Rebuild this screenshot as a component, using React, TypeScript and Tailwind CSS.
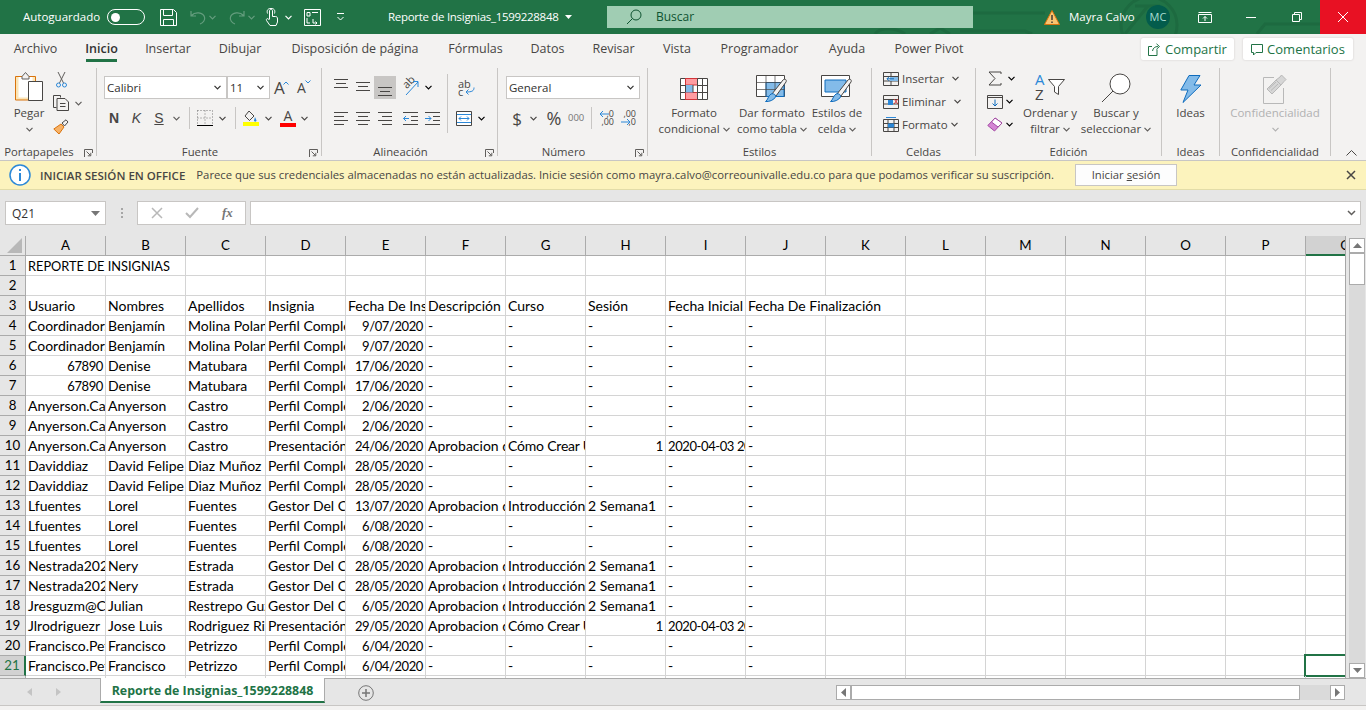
import type { ReactNode } from 'react';

const COLS = ['A', 'B', 'C', 'D', 'E', 'F', 'G', 'H', 'I', 'J', 'K', 'L', 'M', 'N', 'O', 'P', 'Q'];

const DONE = ['-', '-', '-', '-', '-'];
const ROWS: string[][] = [
  ['REPORTE DE INSIGNIAS'],
  [],
  ['Usuario', 'Nombres', 'Apellidos', 'Insignia', 'Fecha De Inscripción', 'Descripción', 'Curso', 'Sesión', 'Fecha Inicial', 'Fecha De Finalización'],
  ['Coordinador.bm', 'Benjamín', 'Molina Polanco', 'Perfil Completo', '9/07/2020', ...DONE],
  ['Coordinador.bm', 'Benjamín', 'Molina Polanco', 'Perfil Completo', '9/07/2020', ...DONE],
  ['67890', 'Denise', 'Matubara', 'Perfil Completo', '17/06/2020', ...DONE],
  ['67890', 'Denise', 'Matubara', 'Perfil Completo', '17/06/2020', ...DONE],
  ['Anyerson.Castro', 'Anyerson', 'Castro', 'Perfil Completo', '2/06/2020', ...DONE],
  ['Anyerson.Castro', 'Anyerson', 'Castro', 'Perfil Completo', '2/06/2020', ...DONE],
  ['Anyerson.Castro', 'Anyerson', 'Castro', 'Presentación del curso', '24/06/2020', 'Aprobacion del curso', 'Cómo Crear Un Curso', '1', '2020-04-03 20:00', '-'],
  ['Daviddiaz', 'David Felipe', 'Diaz Muñoz', 'Perfil Completo', '28/05/2020', ...DONE],
  ['Daviddiaz', 'David Felipe', 'Diaz Muñoz', 'Perfil Completo', '28/05/2020', ...DONE],
  ['Lfuentes', 'Lorel', 'Fuentes', 'Gestor Del Curso', '13/07/2020', 'Aprobacion del curso', 'Introducción a la tutoría', '2 Semana1', '-', '-'],
  ['Lfuentes', 'Lorel', 'Fuentes', 'Perfil Completo', '6/08/2020', ...DONE],
  ['Lfuentes', 'Lorel', 'Fuentes', 'Perfil Completo', '6/08/2020', ...DONE],
  ['Nestrada2020', 'Nery', 'Estrada', 'Gestor Del Curso', '28/05/2020', 'Aprobacion del curso', 'Introducción a la tutoría', '2 Semana1', '-', '-'],
  ['Nestrada2020', 'Nery', 'Estrada', 'Gestor Del Curso', '28/05/2020', 'Aprobacion del curso', 'Introducción a la tutoría', '2 Semana1', '-', '-'],
  ['Jresguzm@Correo', 'Julian', 'Restrepo Guzmán', 'Gestor Del Curso', '6/05/2020', 'Aprobacion del curso', 'Introducción a la tutoría', '2 Semana1', '-', '-'],
  ['Jlrodriguezr', 'Jose Luis', 'Rodriguez Rivera', 'Presentación del curso', '29/05/2020', 'Aprobacion del curso', 'Cómo Crear Un Curso', '1', '2020-04-03 20:00', '-'],
  ['Francisco.Petrizzo', 'Francisco', 'Petrizzo', 'Perfil Completo', '6/04/2020', ...DONE],
  ['Francisco.Petrizzo', 'Francisco', 'Petrizzo', 'Perfil Completo', '6/04/2020', ...DONE],
  [],
];

// tab name + the width it takes in the reference, Open Sans runs a bit off Segoe
const TABS: [string, string][] = [
  ['Archivo', 'w-[43px]'],
  ['Inicio', 'w-[31px]'],
  ['Insertar', 'w-[44px]'],
  ['Dibujar', 'w-[42px]'],
  ['Disposición de página', 'w-[130px]'],
  ['Fórmulas', 'w-[53px]'],
  ['Datos', 'w-[33px]'],
  ['Revisar', 'w-[41px]'],
  ['Vista', 'w-[28px]'],
  ['Programador', 'w-[79px]'],
  ['Ayuda', 'w-[38px]'],
  ['Power Pivot', 'w-[68px]'],
];

function Chev({ className = 'text-[#605e5c]' }: { className?: string }) {
  return (
    <svg width="7" height="5" viewBox="0 0 7 5" className={`shrink-0 inline-block ${className}`}>
      <path d="M0.5 0.8 3.5 3.8 6.5 0.8" fill="none" stroke="currentColor" strokeWidth="1.2" />
    </svg>
  );
}

function Sep() {
  return <div className="w-px h-[88px] mt-[2px] bg-[#c8c6c4] shrink-0" />;
}

function MiniSep() {
  return <div className="w-px h-[22px] bg-[#c8c6c4] shrink-0" />;
}

function Launcher() {
  return (
    <svg width="9" height="9" viewBox="0 0 9 9" className="absolute right-[3px] top-[5px] text-[#605e5c]">
      <path d="M.5 8V.5H8.500V4M2.500 2.500 6.500 6.500M6.800 3.800V6.800H3.800" fill="none" stroke="currentColor" />
    </svg>
  );
}

function Group({ w, label, launcher, children }: { w: string; label: string; launcher?: boolean; children: ReactNode }) {
  return (
    <div className={`${w} shrink-0 flex flex-col mt-[2px]`}>
      <div className="h-[76px] flex">{children}</div>
      <div className={`relative h-[16px] leading-[16px] text-center text-[11.300px] text-[#484644] whitespace-nowrap ${launcher ? 'pr-[18px]' : ''}`}>
        {label}
        {launcher && <Launcher />}
      </div>
    </div>
  );
}

function BigButton({ w, icon, lines, chev, disabled }: { w: string; icon: ReactNode; lines: string[]; chev?: boolean; disabled?: boolean }) {
  return (
    <div className={`${w} shrink-0 flex flex-col items-center text-[11.500px] leading-[16px] whitespace-nowrap ${disabled ? 'text-[#b1b1b1]' : 'text-[#484644]'}`}>
      <div className="h-[37px] pt-[5px] flex items-center justify-center">{icon}</div>
      {lines.map((l, i) => (
        <div key={l} className="flex items-center gap-[3px]">
          {l}
          {chev && i === lines.length - 1 && <Chev />}
        </div>
      ))}
    </div>
  );
}

function Combo({ w, text }: { w: string; text: string }) {
  return (
    <div className={`${w} h-[23px] bg-white border border-[#c8c6c4] flex items-center justify-between pl-[2px] pr-[5px] text-[11.500px] text-[#323130]`}>
      <span>{text}</span>
      <Chev className="text-[#323130]" />
    </div>
  );
}

// three or four horizontal strokes, each [from x, to x, y]
function AlignIcon({ lines, h }: { lines: [number, number, number][]; h: number }) {
  return (
    <svg width="22" height={h} viewBox={`0 0 22 ${h}`} fill="none" className="text-[#484644] shrink-0">
      {lines.map(([a, b, y]) => (
        <path key={`${a}-${y}`} d={`M${a} ${y + 0.5}H${b}`} stroke="currentColor" />
      ))}
    </svg>
  );
}

function IndentIcon({ right }: { right?: boolean }) {
  return (
    <svg width="15" height="13" viewBox="0 0 15 13" fill="none" className="shrink-0">
      <path d="M0 .5H15M8 4.500H15M8 8.500H15M0 12.500H15" stroke="#484644" />
      <path d={right ? 'M0 6.500H6M3.500 4 6 6.500 3.500 9' : 'M6 6.500H0.500M3 4 .5 6.500 3 9'} stroke="#2b88d8" />
    </svg>
  );
}

function TitleBarIcons() {
  return (
    <div className="flex items-center text-white">
      <svg width="17" height="17" viewBox="0 0 17 17" className="ml-[15px]" fill="none" stroke="currentColor">
        <path d="M.5.5H13.500L16.500 3.500V16.500H.5ZM3.500.5V6.500H12.500V.5M3.500 16.500V10.500H13.500V16.500" />
      </svg>
      <svg width="16" height="16" viewBox="0 0 16 16" className="ml-[13px] opacity-30" fill="none" stroke="currentColor" strokeWidth="1.2">
        <path d="M1 2V7H6M1.500 6.500C5 2.500 13 3 14.500 8C15.500 11 13 14 10 15" />
      </svg>
      <Chev className="ml-[3px] opacity-30" />
      <svg width="16" height="16" viewBox="0 0 16 16" className="ml-[13px] opacity-30" fill="none" stroke="currentColor" strokeWidth="1.2">
        <path d="M15 2V7H10M14.500 6.500C11 2.500 3 3 1.500 8C.5 11 3 14 6 15" />
      </svg>
      <Chev className="ml-[3px] opacity-30" />
      <svg width="13" height="18" viewBox="0 0 13 18" className="ml-[10px]" fill="none" stroke="currentColor">
        <path d="M4.500 11V3C4.500.8 7.500.8 7.500 3V8.500H10.500C12 8.500 12.500 9.500 12.500 11V14L11 17.500H5L1.500 12.500C.8 11 2.500 10 3.500 11L4.500 12M2.500 5.500C1.500 2 3 .5 6 .5S10.500 2 9.500 5.500" />
      </svg>
      <Chev className="ml-[7px] text-white" />
      <svg width="17" height="17" viewBox="0 0 17 17" className="ml-[12px]" fill="none" stroke="currentColor">
        <path d="M.5.5H16.500V16.500H.5ZM3 3.500H6V7H3ZM8 3.500H14M3 9V14H6M9 10V14H13M11.500 12.500 13 14 11.500 15.500" />
      </svg>
      <svg width="9" height="8" viewBox="0 0 9 8" className="ml-[15px]" fill="none" stroke="currentColor">
        <path d="M1 .5H8M1.500 4 4.500 7 7.500 4" />
      </svg>
    </div>
  );
}

function TitleBar() {
  return (
    <div className="relative h-[34px] bg-[#217346] flex items-center text-white text-[11.500px] shrink-0 overflow-hidden">
      {/* faint circuit board from the Office theme */}
      <svg width="466" height="34" viewBox="0 0 466 34" className="absolute left-[860px] top-0 text-[#1d6a40]" fill="none" stroke="currentColor" strokeWidth="3">
        <circle cx="289" cy="25" r="28" />
        <path d="M275 6H300M288 6 265 34" />
        <path d="M113 13H185M15 34C20 27 35 27 45 34M70 34 80 28 90 34M100 31H165L172 34M397 34 405 24H466" />
      </svg>
      <div className="relative flex items-center">
        <span className="ml-[23px] w-[78px] whitespace-nowrap">Autoguardado</span>
        <div className="ml-[6px] w-[38px] h-[16px] rounded-full border border-white flex items-center pl-[3px]">
          <div className="w-[9px] h-[9px] rounded-full bg-white" />
        </div>
        <TitleBarIcons />
      </div>
      <div className="relative ml-[43px] flex items-center">
        <span className="w-[171px] whitespace-nowrap tracking-[-0.3px]">Reporte de Insignias_1599228848</span>
        <svg width="7" height="4" viewBox="0 0 7 4" className="ml-[6px]"><path d="M0 0H7L3.500 4Z" fill="currentColor" /></svg>
      </div>
      <div className="relative ml-[35px] w-[366px] h-[22px] bg-[#a0cdb3] flex items-center text-[#0f5331] text-[12px]">
        <svg width="16" height="16" viewBox="0 0 16 16" className="ml-[19px]" fill="none" stroke="currentColor">
          <circle cx="10" cy="6" r="5" />
          <path d="M6.500 9.500 1 15" />
        </svg>
        <span className="ml-[14px]">Buscar</span>
      </div>
      <div className="relative ml-[71px] flex items-center">
        <svg width="16" height="15" viewBox="0 0 16 15">
          <path d="M8 .5 15.500 14.500H.5Z" fill="#f8c471" stroke="#d9730d" />
          <path d="M8 5V10M8 11.500V13" stroke="#323130" strokeWidth="1.400" />
        </svg>
        <span className="ml-[9px] w-[66px] whitespace-nowrap">Mayra Calvo</span>
        <div className="ml-[11px] w-[24px] h-[24px] rounded-full bg-[#035c4c] flex items-center justify-center text-[11px] text-[#a9dfd3]">MC</div>
      </div>
      <div className="relative ml-auto flex items-center h-full">
        <div className="w-[46px] flex justify-center">
          <svg width="14" height="11" viewBox="0 0 14 11" fill="none" stroke="currentColor"><path d="M.5 2.500H13.500V10.500H.5ZM.5.5H13.500M7 9V4.500M5 6.500 7 4.500 9 6.500" /></svg>
        </div>
        <div className="w-[46px] flex justify-center">
          <svg width="10" height="1" viewBox="0 0 10 1"><path d="M0 .5H10" stroke="currentColor" /></svg>
        </div>
        <div className="w-[46px] flex justify-center">
          <svg width="10" height="10" viewBox="0 0 10 10" fill="none" stroke="currentColor"><path d="M.5 2.500H7.500V9.500H.5ZM2.500 2.500V.5H9.500V7.500H7.500" /></svg>
        </div>
        <div className="w-[46px] h-full bg-[#e81123] flex items-center justify-center">
          <svg width="10" height="10" viewBox="0 0 10 10" fill="none" stroke="currentColor"><path d="M0 0 10 10M10 0 0 10" /></svg>
        </div>
      </div>
    </div>
  );
}

function TabRow() {
  return (
    <div className="h-[32px] flex items-start pl-[14px] pr-[13px] shrink-0 text-[12.500px] text-[#484644]">
      <div className="flex gap-[29px]">
        {TABS.map(([t, w]) => (
          <div key={t} className={`${w} h-[28px] flex items-center justify-center whitespace-nowrap border-b-[3px] pt-[6px] ${t === 'Inicio' ? 'border-[#217346] font-semibold text-[#323130]' : 'border-transparent'}`}>
            {t}
          </div>
        ))}
      </div>
      <div className="ml-auto flex gap-[9px] mt-[4px] text-[#217346] font-medium text-[13px]">
        <div className="w-[93px] h-[22px] pt-px bg-white rounded-[2px] shadow-[0_0_2px_#c8c6c4] flex items-center justify-center gap-[4px]">
          <svg width="13" height="13" viewBox="0 0 13 13" fill="none" stroke="currentColor"><path d="M9 6.500V12.500H.5V3.500H4M4.500 8C5 5 7 3.500 10 3.500M8.500 .8 11.500 3.500 8.500 6.200" /></svg>
          Compartir
        </div>
        <div className="w-[110px] h-[22px] pt-px bg-white rounded-[2px] shadow-[0_0_2px_#c8c6c4] flex items-center justify-center gap-[4px]">
          <svg width="12" height="12" viewBox="0 0 12 12" fill="none" stroke="currentColor"><path d="M.5.5H11.500V8.500H5L2.500 11V8.500H.5Z" /></svg>
          Comentarios
        </div>
      </div>
    </div>
  );
}

function PasteIcon() {
  return (
    <svg width="28" height="31" viewBox="0 0 28 31">
      <path d="M.5 4.500H20.500V28H.5Z" fill="#fbe5b6" stroke="#d9730d" />
      <path d="M3.500 5H17.500V25.500H3.500Z" fill="#fff" />
      <path d="M7 4.500 10.500.5 14 4.500V7H7Z" fill="#f3f2f1" stroke="#605e5c" />
      <path d="M13.500 9.500H27.500V28.500H13.500Z" fill="#fff" stroke="#484644" />
    </svg>
  );
}

function Clipboard() {
  return (
    <div className="flex shrink-0">
      <div className="w-[46px] ml-[6px] pt-[3px] flex flex-col items-center text-[11.500px] text-[#484644] leading-[16px]">
        <div className="h-[34px] pt-[1px]"><PasteIcon /></div>
        <div>Pegar</div>
        <div className="h-[16px] flex items-center"><Chev /></div>
      </div>
      <div className="-mt-px flex flex-col">
        <div className="h-[24px] flex items-center pl-[4px]">
          <svg width="11" height="17" viewBox="0 0 11 17" fill="none">
            <path d="M2 1 7.500 12M9 1 3.500 12" stroke="#605e5c" />
            <circle cx="2.500" cy="14" r="2" stroke="#2b88d8" />
            <circle cx="8.500" cy="14" r="2" stroke="#2b88d8" />
          </svg>
        </div>
        <div className="h-[24px] flex items-center gap-[5px] pl-[1px]">
          <svg width="17" height="16" viewBox="0 0 17 16" fill="none" stroke="#484644">
            <path d="M.5.5H7.500V2.500M.5.5V12.500H3.500M4 3.500H12L15.500 7V15.500H4ZM7 8.500H12.500M7 11.500H12.500" />
          </svg>
          <Chev />
        </div>
        <div className="h-[24px] flex items-center pl-[1px]">
          <svg width="16" height="16" viewBox="0 0 16 16">
            <path d="M8 5 11 8 6 15 .8 10Z" fill="#f7b267" stroke="#d9730d" />
            <path d="M9 4 13 .8 15 3 11.500 7Z" fill="#f3f2f1" stroke="#484644" />
          </svg>
        </div>
      </div>
    </div>
  );
}

function Font() {
  return (
    <div className="pl-[7px] pt-[8px]">
      <div className="flex items-center">
        <Combo w="w-[123px]" text="Calibri" />
        <Combo w="w-[43px]" text="11" />
        <span className="relative ml-[4px] w-[15px] text-[17px] text-[#484644] leading-[20px]">
          A
          <svg width="6" height="4" viewBox="0 0 6 4" className="absolute right-0 top-[3px]" fill="none" stroke="#2b88d8"><path d="M.5 3.500 3 1 5.500 3.500" /></svg>
        </span>
        <span className="relative ml-[8px] w-[14px] text-[14px] text-[#484644] leading-[20px]">
          A
          <svg width="6" height="4" viewBox="0 0 6 4" className="absolute right-0 top-[2px]" fill="none" stroke="#2b88d8"><path d="M.5.5 3 3 5.500 .5" /></svg>
        </span>
      </div>
      <div className="flex items-center h-[22px] mt-[8px] text-[#484644]">
        <span className="ml-[5px] w-[10px] text-center text-[14px] font-bold font-['Liberation_Sans',sans-serif]">N</span>
        <span className="ml-[14px] w-[7px] flex justify-center text-[14px] italic font-['Liberation_Sans',sans-serif]">K</span>
        <span className="ml-[15px] w-[8px] flex justify-center text-[14px] underline font-['Liberation_Sans',sans-serif]">S</span>
        <Chev className="ml-[10px] text-[#605e5c]" />
        <div className="ml-[9px]"><MiniSep /></div>
        <svg width="16" height="16" viewBox="0 0 16 16" className="ml-[7px]" fill="none" stroke="#767676" strokeDasharray="1 2">
          <path d="M.5.5H15.500M.5.5V15.500M15.500.5V15.500M8 .5V15.500M.5 8H15.500" />
          <path d="M0 15.500H16" stroke="#000" strokeDasharray="none" />
        </svg>
        <Chev className="ml-[6px]" />
        <div className="ml-[9px]"><MiniSep /></div>
        <div className="ml-[7px] w-[16px] flex flex-col items-center">
          <svg width="14" height="12" viewBox="0 0 14 12" fill="none">
            <path d="M5 1 10 6 5.500 10.500 1 6Z" stroke="#484644" />
            <path d="M11 7 12.500 10.500C12.500 12 10 12 10 10.500Z" fill="#2b88d8" />
          </svg>
          <div className="w-[16px] h-[4px] bg-[#ffff00]" />
        </div>
        <Chev className="ml-[6px]" />
        <div className="ml-[8px] w-[16px] flex flex-col items-center">
          <span className="text-[14px] leading-[14px] text-[#484644]">A</span>
          <div className="w-[16px] h-[4px] bg-[#ff0000]" />
        </div>
        <Chev className="ml-[5px]" />
      </div>
    </div>
  );
}

function Alignment() {
  return (
    <div className="pl-[8px] pt-[8px] flex">
      <div className="w-[117px]">
        <div className="flex items-center h-[23px]">
          <AlignIcon h={23} lines={[[4, 18, 3], [6, 16, 7], [4, 18, 11]]} />
          <AlignIcon h={23} lines={[[4, 18, 6], [6, 16, 10], [4, 18, 14]]} />
          <div className="bg-[#c8c6c4] w-[22px] h-[23px] shrink-0">
            <AlignIcon h={23} lines={[[4, 18, 11], [6, 16, 15], [4, 18, 19]]} />
          </div>
          <div className="relative ml-[6px] w-[17px] h-[17px] shrink-0">
            <span className="absolute left-0 top-[-3px] text-[11px] leading-[12px] text-[#484644] -rotate-45">ab</span>
            <svg width="17" height="17" viewBox="0 0 17 17" fill="none" stroke="#2b88d8" className="absolute left-0 top-0">
              <path d="M4 16 16 3M11 2.500H16V8" />
            </svg>
          </div>
          <Chev className="ml-[6px]" />
        </div>
        <div className="flex items-center mt-[8px] h-[22px]">
          <AlignIcon h={22} lines={[[4, 18, 5], [4, 14, 9], [4, 18, 13], [4, 14, 17]]} />
          <AlignIcon h={22} lines={[[4, 18, 5], [6, 16, 9], [4, 18, 13], [6, 16, 17]]} />
          <AlignIcon h={22} lines={[[4, 18, 5], [8, 18, 9], [4, 18, 13], [8, 18, 17]]} />
          <div className="ml-[7px]"><IndentIcon /></div>
          <div className="ml-[7px]"><IndentIcon right /></div>
        </div>
      </div>
      <div className="w-px h-[59px] -mt-[2px] bg-[#c8c6c4] shrink-0" />
      <div className="ml-[8px]">
        <div className="h-[23px] pt-[4px] flex items-start">
          <span className="relative w-[16px] ml-[2px] text-[11px] leading-[8px] text-[#484644]">
            ab<br />c
            <svg width="11" height="8" viewBox="0 0 11 8" fill="none" stroke="#2b88d8" className="absolute left-[6px] top-[7px]">
              <path d="M10 .5C10 4 8 5 2 5M4.500 2.500 2 5 4.500 7.500" />
            </svg>
          </span>
        </div>
        <div className="flex items-center h-[22px] mt-[8px]">
          <svg width="16" height="15" viewBox="0 0 16 15" fill="none">
            <path d="M.5.5H15.500V14.500H.5Z" fill="#fff" stroke="#484644" />
            <path d="M1 3.500H15M1 11.500H15" stroke="#2b88d8" />
            <path d="M3 7.500H13M5 5.500 3 7.500 5 9.500M11 5.500 13 7.500 11 9.500" stroke="#2b88d8" />
          </svg>
          <Chev className="ml-[6px]" />
        </div>
      </div>
    </div>
  );
}

function DecimalIcon({ more }: { more?: boolean }) {
  return (
    <div className="relative w-[15px] h-[16px] shrink-0 text-[9px] leading-[8px] text-right text-[#484644]">
      {more ? ',00' : ',0'}
      <br />
      {more ? ',0' : ',00'}
      <svg width="10" height="8" viewBox="0 0 10 8" fill="none" stroke="#2b88d8" className={`absolute left-0 ${more ? 'top-[8px]' : 'top-0'}`}>
        <path d={more ? 'M0 4H9M6 1 9 4 6 7' : 'M10 4H1M4 1 1 4 4 7'} />
      </svg>
    </div>
  );
}

function NumberGroup() {
  return (
    <div className="pl-[8px] pt-[8px]">
      <Combo w="w-[134px]" text="General" />
      <div className="flex items-center h-[22px] mt-[8px] text-[#484644]">
        <span className="ml-[5px] w-[12px] text-center text-[17px] leading-none">$</span>
        <Chev className="ml-[7px]" />
        <span className="ml-[9px] w-[16px] flex justify-center text-[18px] leading-none">%</span>
        <span className="ml-[6px] text-[9.500px] w-[16px] text-[#767676]">000</span>
        <div className="ml-[7px]"><MiniSep /></div>
        <div className="ml-[7px]"><DecimalIcon /></div>
        <div className="ml-[7px]"><DecimalIcon more /></div>
      </div>
    </div>
  );
}

function CondIcon() {
  return (
    <svg width="28" height="22" viewBox="0 0 28 22" fill="none">
      <path d="M.5.5H27.500V21.500H.5Z" fill="#fff" stroke="#484644" />
      <path d="M5.500.5H17.500V7H5.500ZM5.500 14.500H17.500V21.500H5.500Z" fill="#ff9ca1" stroke="#d13438" />
      <path d="M5.500 7H13V14.500H5.500Z" fill="#83bbe9" />
      <path d="M5.500 7V14.500M13 7V14.500M17.500 .5V21.500M22.500 .5V21.500M.5 7.500H5M17.500 7.500H27.500M.5 14.500H5M17.500 14.500H27.500" stroke="#484644" />
    </svg>
  );
}

function TableBrush({ wide }: { wide?: boolean }) {
  return (
    <svg width="32" height="28" viewBox="0 0 32 28" fill="none">
      <path d="M.5.5H28.500V21.500H.5Z" fill="#fff" stroke="#484644" />
      <path d={wide ? 'M4 5H25V17H4Z' : 'M10 7.500H28V21.500H10Z'} fill="#83bbe9" stroke="#0f6cbd" />
      {!wide && <path d="M.5 7.500H28.500M.5 14.500H28.500M10 .5V21.500M19 .5V21.500" stroke="#484644" strokeOpacity=".7" />}
      <path d="M16 19 27 5C29 3 31 5 30 7L20 21Z" fill="#f3f2f1" stroke="#484644" />
      <path d="M15 19C18 18 20 20 19.500 22C18 25 13 27 9.500 26.500C12 25 12 21 15 19Z" fill="#83bbe9" stroke="#0f6cbd" />
    </svg>
  );
}

function Styles() {
  return (
    <div className="pl-[8px] flex">
      <BigButton w="w-[76px]" icon={<CondIcon />} lines={['Formato', 'condicional']} chev />
      <BigButton w="w-[80px]" icon={<TableBrush />} lines={['Dar formato', 'como tabla']} chev />
      <BigButton w="w-[50px]" icon={<TableBrush wide />} lines={['Estilos de', 'celda']} chev />
    </div>
  );
}

function Cells() {
  const row = (icon: ReactNode, text: string, gap: string) => (
    <div className="h-[23px] flex items-center text-[11.500px] text-[#484644]">
      <div className="w-[19px]">{icon}</div>
      <span>{text}</span>
      <Chev className={gap} />
    </div>
  );
  return (
    <div className="pl-[11px] -mt-px">
      {row(
        <svg width="16" height="14" viewBox="0 0 16 14" fill="none"><path d="M.5.5H15.500V13.500H.5ZM.5 4.500H15.500M.5 9H15.500M8 .5V13.500" stroke="#484644" /><path d="M7 5H15V9H7Z" fill="#83bbe9" /><path d="M11 6.800H4M6 4.800 4 6.800 6 8.800" stroke="#0f6cbd" /></svg>,
        'Insertar', 'ml-[8px]')}
      {row(
        <svg width="16" height="14" viewBox="0 0 16 14" fill="none"><path d="M.5.5H15.500V13.500H.5ZM.5 4.500H15.500M.5 9H15.500" stroke="#484644" /><path d="M5 5H10V10H5Z" fill="#2b88d8" /><path d="M11 4 15 9M15 4 11 9" stroke="#d13438" /></svg>,
        'Eliminar', 'ml-[8px]')}
      {row(
        <svg width="16" height="15" viewBox="0 0 16 15" fill="none"><path d="M.5 2.500H15.500V14.500H.5ZM.5 6.500H15.500M.5 10.500H15.500M5 2.500V14.500M11 2.500V14.500" stroke="#484644" /><path d="M5 6.500H11V10.500H5Z" fill="#2b88d8" /><path d="M3 .5H13" stroke="#2b88d8" /></svg>,
        'Formato', 'ml-[3px]')}
    </div>
  );
}

function Editing() {
  return (
    <div className="flex pl-[11px]">
      <div className="w-[32px] -mt-px">
        <div className="h-[23px] flex items-center">
          <svg width="16" height="15" viewBox="0 0 16 15" fill="none" stroke="#484644"><path d="M14 3V1H2L8 7.500 2 14H14V12" /></svg>
          <Chev className="ml-[5px]" />
        </div>
        <div className="h-[23px] flex items-center">
          <svg width="16" height="14" viewBox="0 0 16 14" fill="none"><path d="M.5.5H15.500V13.500H.5ZM.5 2.500H15.500" stroke="#484644" /><path d="M8 4.500V11M5.500 8.500 8 11 10.500 8.500" stroke="#0f6cbd" /></svg>
          <Chev className="ml-[3px]" />
        </div>
        <div className="h-[23px] flex items-center">
          <svg width="16" height="15" viewBox="0 0 16 15"><path d="M.8 8.500 8 1 15 6 7.500 14Z" fill="#d486d4" stroke="#a349a4" /><path d="M8 1 15 6 11 10 4.500 5Z" fill="#fff" stroke="#a349a4" /></svg>
          <Chev className="ml-[3px]" />
        </div>
      </div>
      <BigButton w="w-[62px]" icon={
        <div className="relative w-[30px] h-[28px] -mt-[3px]">
          <span className="absolute left-0 -top-[2px] text-[15px] leading-[15px] text-[#2b88d8]">A</span>
          <span className="absolute left-0 top-[13px] text-[15px] leading-[15px] text-[#484644]">Z</span>
          <svg width="17" height="16" viewBox="0 0 17 16" fill="none" className="absolute right-0 top-[5px]"><path d="M.5.5H16.500L10.500 7.500V15.500L6.500 13V7.500Z" stroke="#484644" fill="#fff" /></svg>
        </div>
      } lines={['Ordenar y', 'filtrar']} chev />
      <BigButton w="w-[70px]" icon={
        <svg width="30" height="30" viewBox="0 0 30 30" fill="none" stroke="#484644" className="-mt-[2px]"><circle cx="19" cy="11" r="10" fill="#fff" /><path d="M12 18 1 29" /></svg>
      } lines={['Buscar y', 'seleccionar']} chev />
    </div>
  );
}

function Sheet() {
  return (
    <div className="flex-1 min-w-0 overflow-hidden border-r border-[#a6a6a6]">
      <div className="grid grid-cols-[26px_repeat(17,80px)] grid-rows-[repeat(22,20px)] w-[1386px] bg-white font-['Lato',sans-serif] text-[14px] text-[#000]">
        <div className="bg-[#e6e6e6] border-r border-b border-[#ababab] relative">
          <svg width="15" height="15" viewBox="0 0 15 15" className="absolute right-[3px] bottom-[2px]"><path d="M15 0V15H0Z" fill="#b8b8b8" /></svg>
        </div>
        {COLS.map((c) => (
          <div
            key={c}
            className={`flex items-center justify-center pt-px text-[13.300px] border-r border-[#ababab] ${c === 'Q' ? 'bg-[#d2d2d2] border-b-[2px] border-b-[#217346]' : 'bg-[#e6e6e6] border-b border-b-[#ababab]'}`}
          >
            {c}
          </div>
        ))}
        {ROWS.map((row, r) => {
          const cells: ReactNode[] = [];
          let skip = false;
          COLS.forEach((_, c) => {
            if (skip) {
              skip = false;
              return;
            }
            const text = row[c] ?? '';
            const isWide = (r === 0 && c === 0) || (r === 2 && c === 9);
            skip = isWide;
            const right = /^[\d/]+$/.test(text);
            const compact = right || text.startsWith('2020');
            const selected = r === 20 && c === 16;
            cells.push(
              <div
                key={c}
                className={`relative whitespace-nowrap px-[2px] leading-[20px] border-r border-b border-[#d4d4d4] ${selected ? 'overflow-visible' : 'overflow-hidden'} ${isWide ? 'col-span-2' : ''} ${right ? 'text-right' : 'text-left'} ${compact ? 'text-[13px] tracking-[-0.4px]' : ''} ${text.startsWith('Cómo') ? 'tracking-[-0.2px]' : ''} ${r === 0 ? 'text-[12.800px]' : ''}`}
              >
                {text}
                {selected && <div className="absolute -left-[2px] -top-[2px] w-[82px] h-[23px] border-2 border-[#217346]" />}
              </div>,
            );
          });
          return (
            <div key={r} className="contents">
              <div className={`flex items-center justify-center text-[13.300px] border-b border-r border-[#ababab] ${r === 20 ? 'bg-[#d2d2d2] text-[#217346] border-r-2 border-r-[#217346]' : 'bg-[#e6e6e6]'}`}>
                {r + 1}
              </div>
              {cells}
            </div>
          );
        })}
      </div>
    </div>
  );
}

function VScroll() {
  const btn = 'w-[16px] h-[15px] shrink-0 bg-white border border-[#ababab] flex items-center justify-center';
  return (
    <div className="w-[20px] shrink-0 pt-[2px] pl-[3px] flex flex-col bg-[#e6e6e6]">
      <div className={btn}><svg width="9" height="5" viewBox="0 0 9 5"><path d="M0 5 4.500 0 9 5Z" fill="#767676" /></svg></div>
      <div className="flex-1 w-[16px] bg-[#dadada] flex flex-col">
        <div className="h-[32px] bg-white border border-[#ababab]" />
      </div>
      <div className={btn}><svg width="9" height="5" viewBox="0 0 9 5"><path d="M0 0 4.500 5 9 0Z" fill="#767676" /></svg></div>
    </div>
  );
}

function SheetTabs() {
  return (
    <div className="h-[27px] bg-[#e6e6e6] flex shrink-0 border-t border-[#ababab] text-[12.400px]">
      <div className="w-[100px] h-[24px] flex items-center pl-[27px] gap-[24px] text-[#c4c4c4] pt-[2px]">
        <svg width="5" height="8" viewBox="0 0 5 8"><path d="M5 0V8L0 4Z" fill="currentColor" /></svg>
        <svg width="5" height="8" viewBox="0 0 5 8"><path d="M0 0V8L5 4Z" fill="currentColor" /></svg>
      </div>
      <div className="-mt-px w-[225px] h-[25px] pt-[4px] bg-white border-l border-r border-[#ababab] border-b-2 border-b-[#217346] flex items-center justify-center font-bold text-[#217346] whitespace-nowrap">
        Reporte de Insignias_1599228848
      </div>
      <div className="ml-[33px] h-[24px] pt-[3px] flex items-center">
        <svg width="16" height="16" viewBox="0 0 16 16" fill="none" stroke="#767676"><circle cx="8" cy="8" r="7.300" /><path d="M8 4V12M4 8H12" strokeWidth="1.500" /></svg>
      </div>
      <div className="ml-auto mr-[21px] flex items-start pt-[6px] h-[24px]">
        <div className="w-[15px] h-[15px] bg-white border border-[#ababab] flex items-center justify-center"><svg width="5" height="9" viewBox="0 0 5 9"><path d="M5 0V9L0 4.500Z" fill="#767676" /></svg></div>
        <div className="w-[449px] h-[15px] bg-white border border-[#ababab]" />
        <div className="w-[30px] h-[15px] bg-[#dadada]" />
        <div className="w-[15px] h-[15px] bg-white border border-[#ababab] flex items-center justify-center"><svg width="5" height="9" viewBox="0 0 5 9"><path d="M0 0V9L5 4.500Z" fill="#767676" /></svg></div>
      </div>
    </div>
  );
}

export default function App() {
  return (
    <div className="w-[1366px] h-[710px] overflow-hidden flex flex-col bg-[#f3f2f1] font-['Open_Sans',sans-serif]">
      <TitleBar />
      <TabRow />
      <div className="h-[95px] flex shrink-0 border-b border-[#c8c6c4]">
        <Group w="w-[96px]" label="Portapapeles" launcher><Clipboard /></Group>
        <Sep />
        <Group w="w-[224px]" label="Fuente" launcher><Font /></Group>
        <Sep />
        <Group w="w-[175px]" label="Alineación" launcher><Alignment /></Group>
        <Sep />
        <Group w="w-[149px]" label="Número" launcher><NumberGroup /></Group>
        <Sep />
        <Group w="w-[223px]" label="Estilos"><Styles /></Group>
        <Sep />
        <Group w="w-[103px]" label="Celdas"><Cells /></Group>
        <Sep />
        <Group w="w-[185px]" label="Edición"><Editing /></Group>
        <Sep />
        <Group w="w-[57px]" label="Ideas">
          <BigButton w="w-[57px]" lines={['Ideas']} icon={
            <svg width="22" height="28" viewBox="0 0 22 28"><path d="M9 .5H20L14 10H21L3 27.500L8 15H.8Z" fill="#83bbe9" stroke="#0f6cbd" /></svg>
          } />
        </Group>
        <Sep />
        <Group w="w-[110px]" label="Confidencialidad">
          <div className="w-[110px] flex flex-col items-center">
            <BigButton w="w-[110px]" disabled lines={['Confidencialidad']} icon={
              <svg width="24" height="30" viewBox="0 0 24 30" fill="none" stroke="#b8b8b8">
                <path d="M.5 3.500H11M20.500 14V29.500H.5V3.500" />
                <path d="M4 15 13 6 18 11 9 20Z" fill="#d6d6d6" />
                <path d="M6 14.500 13 8M8 16.500 15 10" />
                <path d="M13 6 17 3 18.500 1 23 5.500 21 7.500 18 11Z" fill="#d6d6d6" />
              </svg>
            } />
            <div className="h-[16px] flex items-center"><Chev className="text-[#b1b1b1]" /></div>
          </div>
        </Group>
        <Sep />
        <div className="flex-1 flex justify-end items-end pb-[4px] pr-[9px]">
          <svg width="11" height="6" viewBox="0 0 11 6" fill="none" stroke="#484644"><path d="M.5 5.500 5.500.5 10.500 5.500" /></svg>
        </div>
      </div>
      <div className="h-[29px] bg-[#fcf3bd] flex items-center shrink-0 border-b border-[#e2dca8] text-[#484644] whitespace-nowrap">
        <svg width="22" height="22" viewBox="0 0 22 22" className="ml-[9px]" fill="none">
          <circle cx="11" cy="11" r="10" fill="#fff" stroke="#2b88d8" strokeWidth="1.500" />
          <path d="M11 9V17M11 5V7" stroke="#2b88d8" strokeWidth="2" />
        </svg>
        <span className="ml-[9px] pt-px font-semibold text-[11.500px]">INICIAR SESIÓN EN OFFICE</span>
        <span className="ml-[11px] pt-px text-[11.300px]">Parece que sus credenciales almacenadas no están actualizadas. Inicie sesión como mayra.calvo@correounivalle.edu.co para que podamos verificar su suscripción.</span>
        <div className="ml-auto w-[291px] flex items-center shrink-0">
          <div className="w-[102px] h-[22px] pt-px bg-[#fdfdfd] border border-[#c8c6c4] flex items-center justify-center text-[11.300px]">Iniciar&nbsp;<span className="underline">s</span>esión</div>
          <svg width="10" height="10" viewBox="0 0 10 10" className="ml-[169px]" fill="none" stroke="#484644" strokeWidth="1.500"><path d="M1 1 9 9M9 1 1 9" /></svg>
        </div>
      </div>
      <div className="h-[46px] bg-[#e6e6e6] flex items-start pt-[11px] pl-[5px] pr-[5px] shrink-0">
        <div className="w-[101px] h-[24px] bg-white border border-[#c8c6c4] flex items-center justify-between pl-[6px] pr-[5px] pt-px text-[12px] text-[#323130]">
          Q21
          <svg width="9" height="5" viewBox="0 0 9 5"><path d="M0 0H9L4.500 5Z" fill="#767676" /></svg>
        </div>
        <div className="w-[31px] h-[24px] flex flex-col items-center justify-center gap-[2px]">
          <div className="w-[2px] h-[2px] bg-[#a6a6a6]" />
          <div className="w-[2px] h-[2px] bg-[#a6a6a6]" />
          <div className="w-[2px] h-[2px] bg-[#a6a6a6]" />
        </div>
        <div className="w-[109px] h-[24px] bg-white border border-[#c8c6c4] flex items-center">
          <svg width="12" height="12" viewBox="0 0 12 12" className="ml-[13px]" fill="none" stroke="#b8b8b8" strokeWidth="1.500"><path d="M1 1 11 11M11 1 1 11" /></svg>
          <svg width="14" height="12" viewBox="0 0 14 12" className="ml-[22px]" fill="none" stroke="#b8b8b8" strokeWidth="2"><path d="M1 6 5 10 13 1" /></svg>
          <span className="ml-[23px] text-[13px] italic font-['Liberation_Serif',serif] font-bold text-[#767676]">fx</span>
        </div>
        <div className="ml-[4px] flex-1 h-[24px] bg-white border border-[#c8c6c4] flex items-center justify-end pr-[4px]">
          <svg width="9" height="6" viewBox="0 0 9 6" fill="none" stroke="#605e5c" strokeWidth="1.500"><path d="M1 1 4.500 4.500 8 1" /></svg>
        </div>
      </div>
      <div className="h-[442px] flex shrink-0 overflow-hidden">
        <Sheet />
        <VScroll />
      </div>
      <SheetTabs />
      <div className="flex-1 border-t border-[#c8c6c4] bg-[#f3f2f1]" />
    </div>
  );
}
